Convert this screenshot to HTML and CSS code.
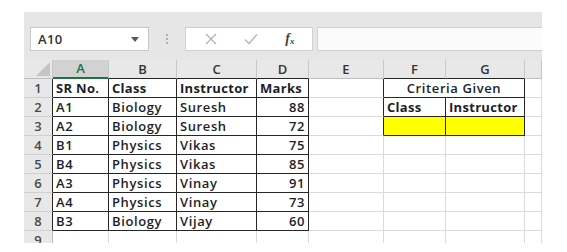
FILE: index.html
```html
<!DOCTYPE html>
<html>
<head>
    <meta charset="UTF-8">
    <title>Criteria Sheet</title>
    <link rel="stylesheet" href="styles.css">
</head>
<body>
    <div class="sheet">
        <div class="formula-bar">
            <div class="name-box">
                <span class="cell-ref">A10</span>
                <svg class="drop" width="8" height="5" viewBox="0 0 8 5"><path d="M0 0H8L4 5Z" fill="#5a5a5a"/></svg>
            </div>
            <div class="grip">
                <span></span><span></span><span></span>
            </div>
            <div class="fx-buttons">
                <svg class="fx-icon" width="12" height="12" viewBox="0 0 12 12"><path d="M1 1L11 11M11 1L1 11" stroke="#b4b4b4" stroke-width="1.4" fill="none"/></svg>
                <svg class="fx-icon" width="14" height="12" viewBox="0 0 14 12"><path d="M1 6.5L5 10.5L13 1.5" stroke="#bcbcbc" stroke-width="1.6" fill="none"/></svg>
                <span class="fx-label">f<sub>x</sub></span>
            </div>
            <div class="formula-input"></div>
        </div>

        <table class="grid">
            <colgroup>
                <col style="width: 29px">
                <col style="width: 56px">
                <col style="width: 68px">
                <col style="width: 80px">
                <col style="width: 52px">
                <col style="width: 75px">
                <col style="width: 62px">
                <col style="width: 79px">
                <col style="width: 17px">
            </colgroup>
            <tr class="col-heads">
                <th class="corner"><span class="corner-mark"></span></th>
                <th class="selected top-edge">A</th>
                <th class="top-edge">B</th>
                <th class="top-edge">C</th>
                <th class="top-edge">D</th>
                <th>E</th>
                <th class="top-edge">F</th>
                <th class="top-edge">G</th>
                <th></th>
            </tr>
            <tr>
                <th class="row-head edge">1</th>
                <td class="box bold">SR No.</td>
                <td class="box bold">Class</td>
                <td class="box bold">Instructor</td>
                <td class="box bold">Marks</td>
                <td class="edge"></td>
                <td class="box center" colspan="2">Criteria Given</td>
                <td></td>
            </tr>
            <tr>
                <th class="row-head edge">2</th>
                <td class="box">A1</td>
                <td class="box">Biology</td>
                <td class="box">Suresh</td>
                <td class="box num">88</td>
                <td class="edge"></td>
                <td class="box bold">Class</td>
                <td class="box bold">Instructor</td>
                <td></td>
            </tr>
            <tr>
                <th class="row-head edge">3</th>
                <td class="box">A2</td>
                <td class="box">Biology</td>
                <td class="box">Suresh</td>
                <td class="box num">72</td>
                <td class="edge"></td>
                <td class="box fill"></td>
                <td class="box fill"></td>
                <td></td>
            </tr>
            <tr>
                <th class="row-head edge">4</th>
                <td class="box">B1</td>
                <td class="box">Physics</td>
                <td class="box">Vikas</td>
                <td class="box num">75</td>
                <td></td><td></td><td></td><td></td>
            </tr>
            <tr>
                <th class="row-head edge">5</th>
                <td class="box">B4</td>
                <td class="box">Physics</td>
                <td class="box">Vikas</td>
                <td class="box num">85</td>
                <td></td><td></td><td></td><td></td>
            </tr>
            <tr>
                <th class="row-head edge">6</th>
                <td class="box">A3</td>
                <td class="box">Physics</td>
                <td class="box">Vinay</td>
                <td class="box num">91</td>
                <td></td><td></td><td></td><td></td>
            </tr>
            <tr>
                <th class="row-head edge">7</th>
                <td class="box">A4</td>
                <td class="box">Physics</td>
                <td class="box">Vinay</td>
                <td class="box num">73</td>
                <td></td><td></td><td></td><td></td>
            </tr>
            <tr>
                <th class="row-head edge">8</th>
                <td class="box">B3</td>
                <td class="box">Biology</td>
                <td class="box">Vijay</td>
                <td class="box num">60</td>
                <td></td><td></td><td></td><td></td>
            </tr>
            <tr>
                <th class="row-head">9</th>
                <td></td><td></td><td></td><td></td><td></td><td></td><td></td><td></td>
            </tr>
        </table>
    </div>
</body>
</html>
```

FILE: styles.css
```css
body {
    margin: 0;
    font-family: "Open Sans", sans-serif;
    background: #fff;
}

.sheet {
    margin: 12px 0 0 24px;
    width: 518px;
    height: 231px;
    overflow: hidden;
    background: #e6e6e6;
}

/* formula bar */

.formula-bar {
    display: flex;
    align-items: flex-start;
    height: 48px;
    padding: 15px 0 0 6px;
    box-sizing: border-box;
}

.name-box {
    display: flex;
    align-items: center;
    justify-content: space-between;
    width: 119px;
    height: 24px;
    padding: 0 9px 0 7px;
    box-sizing: border-box;
    background: #fff;
    border: 1px solid #c8c8c8;
}

.cell-ref {
    font-size: 13px;
    font-weight: 600;
    color: #333;
    letter-spacing: 0.4px;
}

.grip {
    display: flex;
    flex-direction: column;
    align-items: center;
    justify-content: center;
    gap: 2px;
    width: 36px;
    height: 24px;
}

.grip span {
    width: 2px;
    height: 2px;
    background: #b0b0b0;
}

.fx-buttons {
    display: flex;
    align-items: center;
    justify-content: space-around;
    width: 128px;
    height: 24px;
    padding: 0 4px 0 6px;
    box-sizing: border-box;
    background: #fff;
    border: 1px solid #d0d0d0;
}

.fx-label {
    font-family: "Liberation Serif", serif;
    font-style: italic;
    font-weight: bold;
    font-size: 14px;
    color: #444;
}

.fx-label sub {
    font-size: 9px;
    vertical-align: -1px;
}

.formula-input {
    flex: 1;
    height: 24px;
    margin-left: 4px;
    box-sizing: border-box;
    background: #fbfbfb;
    border: 1px solid #d0d0d0;
    border-right: none;
}

/* grid */

.grid {
    table-layout: fixed;
    width: 518px;
    border-collapse: separate;
    border-spacing: 0;
    background: #fff;
}

.grid th,
.grid td {
    height: 19px;
    padding: 0 3px;
    box-sizing: border-box;
    font-size: 13px;
    line-height: 17px;
    white-space: nowrap;
    overflow: hidden;
}

.grid td {
    color: #1e1e2a;
    font-weight: 600;
    letter-spacing: 0.6px;
    border-right: 1px solid #dadada;
    border-bottom: 1px solid #dadada;
}

.col-heads th {
    font-weight: 600;
    color: #333;
    background: #e8e8e8;
    border-right: 1px solid #c8c8c8;
    border-bottom: 1px solid #bdbdbd;
}

.col-heads th.selected {
    color: #217346;
    background: #d2d2d2;
    border-bottom: 2px solid #217346;
}

.col-heads th.top-edge:not(.selected) {
    border-bottom-color: #262626;
}

.corner {
    position: relative;
}

.corner-mark {
    position: absolute;
    right: 2px;
    bottom: 2px;
    width: 0;
    height: 0;
    border-left: 14px solid transparent;
    border-bottom: 14px solid #c4c4c4;
}

.row-head {
    font-weight: 600;
    color: #4a4a4a;
    background: #e8e8e8;
    border-right: 1px solid #bdbdbd;
    border-bottom: 1px solid #d0d0d0;
}

.grid .edge {
    border-right-color: #262626;
}

.grid .box {
    border-right: 1px solid #262626;
    border-bottom: 1px solid #262626;
}

.grid .bold {
    font-weight: bold;
    letter-spacing: 0.3px;
}

.center {
    text-align: center;
}

.num {
    text-align: right;
}

.fill {
    background: #ffff00;
}
```
